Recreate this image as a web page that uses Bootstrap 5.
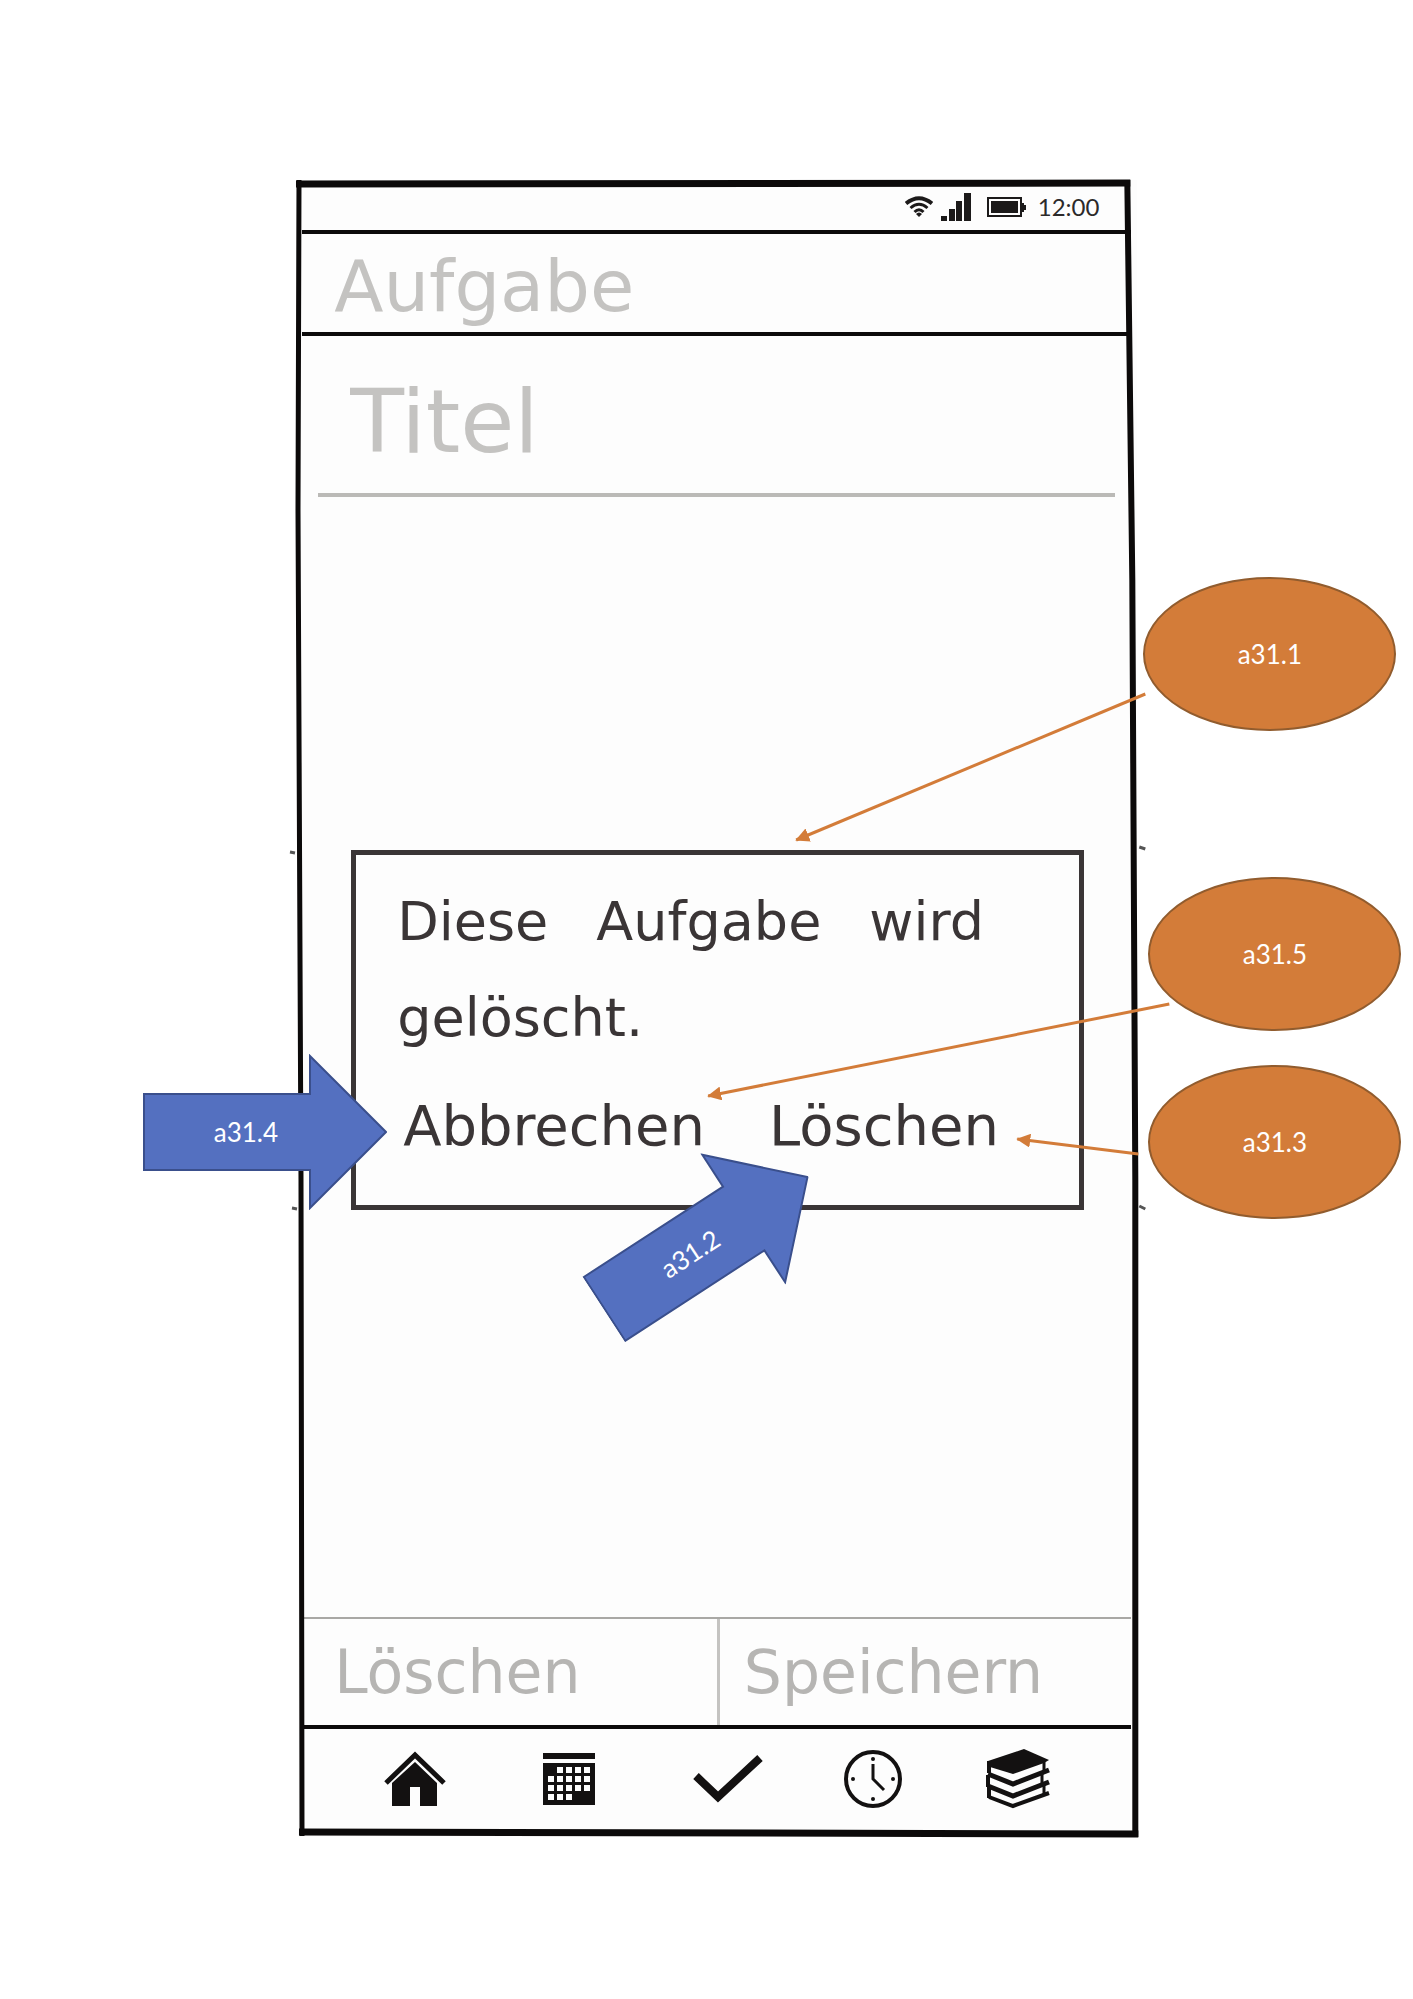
<!DOCTYPE html>
<html lang="de">
<head>
<meta charset="utf-8">
<meta name="viewport" content="width=device-width, initial-scale=1">
<title>Aufgabe löschen</title>
<link href="https://cdn.jsdelivr.net/npm/bootstrap@5.3.0/dist/css/bootstrap.min.css" rel="stylesheet">
<style>
  body { background: #fff; overflow-x: hidden; }
  .stage { padding: 180px 0 162px; }
  .phone { width: 59.4%; margin-left: 21.1%; padding: 8px 6px 8px 4px; background: #fdfdfd; }
  .frame, .connectors { inset: 0; overflow: visible; pointer-events: none; }
  .hand { font-family: "DejaVu Sans", sans-serif; }
  .pencil { color: #c4c3c1; }
  .ink { color: #3a3536; font-size: 54px; line-height: 96px; }
  .statusbar { height: 46px; border-bottom: 4px solid #0c0a0a; padding: 0 32px 4px 0; font-family: Lato, sans-serif; font-size: 24px; color: #2c2a2a; }
  .apphead { height: 102px; border-bottom: 4px solid #0c0a0a; padding: 4px 0 0 32px; }
  .apphead h1 { font-size: 72px; line-height: 96px; }
  .titlefield { margin: 0 16px; padding: 36px 0 21px 32px; border-bottom: 4px solid #bbbab7; }
  .titlefield input { height: 100px; font-size: 88px; line-height: 100px; background: transparent; outline: 0; }
  .sheet { min-height: 1120px; padding: 353px 47px 0 49px; }
  .confirm { border: 5px solid #3a3536; padding: 19px 32px 31px 41px; }
  .words { column-gap: 48px; }
  .choices { column-gap: 64px; margin-top: 12px; padding-left: 6px; }
  .choices .plain { font-size: 56px; }
  .plain { background: none; border: 0; padding: 0; text-align: left; }
  .actions { border-top: 2px solid #a9a8a5; }
  .actions .plain { height: 106px; padding-left: 32px; font-size: 60px; color: #b6b5b3; }
  .actions .plain + .plain { border-left: 3px solid #c4c3c1; padding-left: 24px; }
  .tabs { display: grid; grid-template-columns: 154fr 154fr 164fr 126fr 164fr; height: 104px; border-top: 4px solid #0c0a0a; padding: 0 32px 0 36px; }
  .tabs a { color: #131111; display: flex; align-items: center; justify-content: center; }
  .note { font-family: Lato, sans-serif; font-size: 26px; line-height: 28px; color: #fff; }
  .oval { width: 253px; height: 154px; border-radius: 50%; background: #d37c39; border: 2px solid #915c2e; }
  .arrow { width: 244px; height: 156px; padding-right: 38px; }
  .arrow svg { inset: 0; }
  .n1 { left: 100.7%; top: 397px; }
  .n5 { left: 101.3%; top: 697px; }
  .n3 { left: 101.3%; top: 885px; }
  .n4 { left: -18.5%; top: 874px; }
  .n2 { left: 34.1%; top: 985px; transform: rotate(-33deg); }
</style>
<script src="https://cdn.jsdelivr.net/npm/bootstrap@5.3.0/dist/js/bootstrap.bundle.min.js"></script>
</head>
<body>
<main class="stage">
  <div class="phone position-relative">
    <header>
      <div class="statusbar d-flex align-items-center justify-content-end">
        <svg class="me-2" width="28" height="22" viewBox="0 0 28 22" fill="none" stroke="#1c1a1a" stroke-width="4" aria-hidden="true"><path d="M1 7.500Q14-3 27 7.500"/><path d="M5.500 12Q14 4.500 22.500 12M9.500 16Q14 11.500 18.500 16" stroke-width="3"/><path d="M11 18Q14 15 17 18L14 21Z" fill="#1c1a1a" stroke="none"/></svg>
        <svg width="30" height="30" viewBox="0 0 30 30" fill="#1c1a1a" aria-hidden="true"><path d="M0 24h6v5H0zM8 17h6v12H8zM15 9h6v20h-6zM23 1h7v28h-7z"/></svg>
        <svg class="ms-3 me-2" width="39" height="21" viewBox="0 0 39 21" aria-hidden="true"><rect x="1" y="1" width="33" height="18" fill="none" stroke="#1c1a1a" stroke-width="2"/><path d="M4 4h27v12H4zM35 6h2v2h2v5h-2v2h-2z" fill="#1c1a1a"/></svg>
        <span class="ps-1">12:00</span>
      </div>
      <div class="apphead"><h1 class="hand pencil fw-normal m-0">Aufgabe</h1></div>
    </header>

    <div class="titlefield"><input class="hand pencil border-0 p-0 w-100 d-block" type="text" value="Titel" aria-label="Titel"></div>

    <section class="sheet">
      <div class="confirm hand ink" role="dialog" aria-label="Aufgabe löschen">
        <p class="words d-flex flex-wrap m-0"><span>Diese</span> <span>Aufgabe</span> <span>wird</span> <span>gelöscht.</span></p>
        <div class="choices d-flex flex-wrap">
          <button class="plain ink" type="button">Abbrechen</button>
          <button class="plain ink" type="button">Löschen</button>
        </div>
      </div>
    </section>

    <div class="actions d-flex hand">
      <button class="plain w-50" type="button">Löschen</button>
      <button class="plain w-50" type="button">Speichern</button>
    </div>

    <nav class="tabs" aria-label="Hauptnavigation">
      <a href="#" aria-label="Start"><svg width="62" height="56" viewBox="0 0 62 56"><path d="M2 32 31 4 60 32" fill="none" stroke="currentColor" stroke-width="5"/><path d="M31 11 53 32V55H36V36H26V55H8V32Z" fill="currentColor"/></svg></a>
      <a href="#" aria-label="Kalender"><svg width="52" height="52" viewBox="0 0 52 52"><path d="M0 0h52v6H0zM0 10h52v42H0z" fill="currentColor"/><path d="M14 14h6v6h-6zM23 14h6v6h-6zM32 14h6v6h-6zM41 14h6v6h-6zM5 23h6v6H5zM14 23h6v6h-6zM23 23h6v6h-6zM32 23h6v6h-6zM41 23h6v6h-6zM5 32h6v6H5zM14 32h6v6h-6zM23 32h6v6h-6zM32 32h6v6h-6zM41 32h6v6h-6zM5 41h6v6H5zM14 41h6v6h-6zM23 41h6v6h-6z" fill="#fdfdfd"/></svg></a>
      <a href="#" aria-label="Erledigt"><svg width="70" height="50" viewBox="0 0 70 50" fill="none" stroke="currentColor" stroke-width="8"><path d="M3 22 25 43 67 4"/></svg></a>
      <a href="#" aria-label="Uhr"><svg width="58" height="58" viewBox="0 0 58 58" fill="none" stroke="currentColor"><circle cx="29" cy="29" r="27" stroke-width="4"/><path d="M29 14V29L40 40" stroke-width="3"/><g fill="currentColor" stroke="none"><circle cx="29" cy="9" r="2"/><circle cx="29" cy="49" r="2"/><circle cx="9" cy="29" r="2"/><circle cx="49" cy="29" r="2"/></g></svg></a>
      <a href="#" aria-label="Bücher"><svg width="64" height="60" viewBox="0 0 64 60" fill="none" stroke="currentColor" stroke-width="3"><path d="M2 12 38 0 63 11 58 14 27 25 4 18Z" fill="currentColor" stroke="none"/><path d="M3 12V24M2 26V38M3 38V49" stroke-width="4"/><path d="M2 25 27 35 63 21M2 37 27 47 63 33" stroke-width="5"/><path d="M3 48 27 57 63 44" stroke-width="4"/><path d="M58 13V22M56 24V34M58 36V46"/></svg></a>
    </nav>

    <svg class="frame position-absolute w-100 h-100" viewBox="0 0 839 1657" preserveAspectRatio="none" fill="none" stroke="#0c0a0a" aria-hidden="true">
      <path d="M1 0 0 330 3 1000 4 1656" stroke-width="5"/>
      <path d="M829 0 834 400 837 1000 837 1657" stroke-width="6"/>
      <path d="M-2 4 832 3M1 1652 840 1654" stroke-width="7"/>
      <path d="M841 667 847 669M841 1026 847 1029M-8 672-3 673M-6 1028-1 1029" stroke="#555" stroke-width="3"/>
    </svg>

    <svg class="connectors position-absolute w-100 h-100" viewBox="0 0 839 1657" preserveAspectRatio="none" aria-hidden="true">
      <defs><marker id="tip" markerUnits="userSpaceOnUse" markerWidth="14" markerHeight="14" refX="13" refY="7" orient="auto"><path d="M0 0 14 7 0 14Z" fill="#d37c39"/></marker></defs>
      <g stroke="#d37c39" stroke-width="3">
        <line x1="847" y1="514" x2="498" y2="660" marker-end="url(#tip)"/>
        <line x1="871" y1="824" x2="410" y2="916" marker-end="url(#tip)"/>
        <line x1="840" y1="974" x2="719" y2="959" marker-end="url(#tip)"/>
      </g>
    </svg>

    <div class="note oval n1 position-absolute d-flex align-items-center justify-content-center">a31.1</div>
    <div class="note oval n5 position-absolute d-flex align-items-center justify-content-center">a31.5</div>
    <div class="note oval n3 position-absolute d-flex align-items-center justify-content-center">a31.3</div>
    <div class="note arrow n4 position-absolute d-flex align-items-center justify-content-center">
      <svg class="position-absolute" width="244" height="156" viewBox="0 0 244 156" aria-hidden="true"><path d="M1 40H167V2L243 78 167 154V116H1Z" fill="#5470c0" stroke="#3a4f8c" stroke-width="2"/></svg>
      <span class="position-relative">a31.4</span>
    </div>
    <div class="note arrow n2 position-absolute d-flex align-items-center justify-content-center">
      <svg class="position-absolute" width="244" height="156" viewBox="0 0 244 156" aria-hidden="true"><path d="M1 40H167V2L243 78 167 154V116H1Z" fill="#5470c0" stroke="#3a4f8c" stroke-width="2"/></svg>
      <span class="position-relative">a31.2</span>
    </div>
  </div>
</main>
</body>
</html>
